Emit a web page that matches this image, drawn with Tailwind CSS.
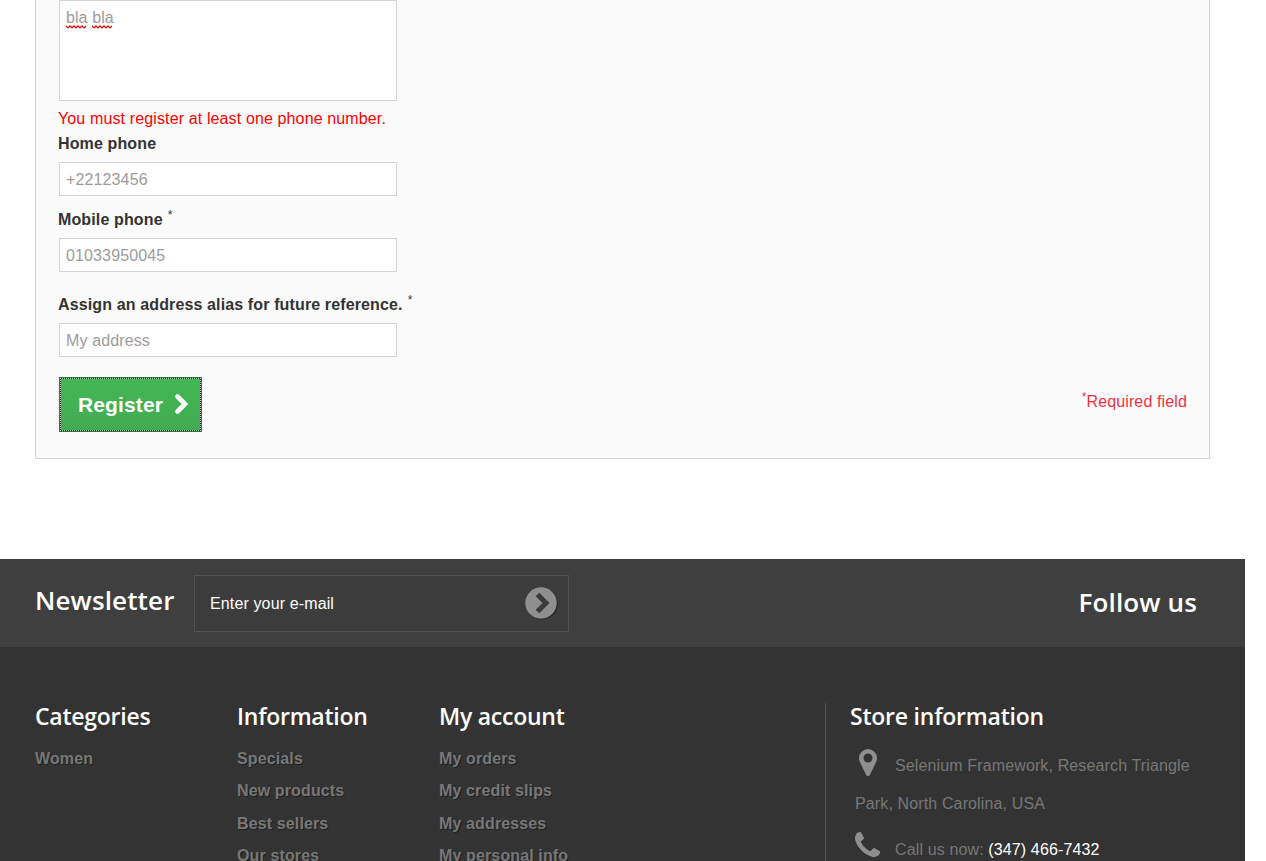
<!DOCTYPE html>
<html lang="en">
<head>
<meta charset="utf-8">
<title>Register</title>
<script src="https://cdn.jsdelivr.net/npm/@tailwindcss/browser@4"></script>
</head>
<body class="h-[861px] w-[1266px] overflow-hidden bg-white font-['Liberation_Sans',Arial,sans-serif] text-base tracking-[0.13px] text-[#333]">
<main class="h-[559px] pl-[35px]">
  <form class="flex h-[459px] w-[1175px] flex-col border border-t-0 border-[#d6d4d4] bg-[#fbfbfb] pl-[23px] pr-[22px]">
    <div class="h-[101px] w-[338px] border border-[#d6d4d4] bg-white pl-1.5 pt-[5px] leading-6 tracking-normal text-[#9c9b9b]">
      <div class="flex gap-[5px]">
        <span class="relative">bla<svg class="absolute left-0 top-[19px]" width="22" height="4" viewBox="0 0 22 4"><path d="M0 .8l2 2 2-2 2 2 2-2 2 2 2-2 2 2 2-2 2 2 2-2" fill="none" stroke="#f00000" stroke-width="1.200"/></svg></span>
        <span class="relative">bla<svg class="absolute left-0 top-[19px]" width="22" height="4" viewBox="0 0 22 4"><path d="M0 .8l2 2 2-2 2 2 2-2 2 2 2-2 2 2 2-2 2 2 2-2" fill="none" stroke="#f00000" stroke-width="1.200"/></svg></span>
      </div>
    </div>
    <p class="-ml-px mt-[5px] h-[25px] leading-[25px] text-[#f00]">You must register at least one phone number.</p>
    <label class="-ml-px h-[31px] font-bold leading-[25px]">Home phone</label>
    <div class="h-[34px] w-[338px] border border-[#d6d4d4] bg-white pl-1.5 leading-[34px] text-[#9c9b9b]">+22123456</div>
    <label class="-ml-px mt-[11px] flex h-[31px] gap-[5px] font-bold leading-[25px]">Mobile phone <span class="-mt-[4px] text-[12px] font-normal">*</span></label>
    <div class="h-[34px] w-[338px] border border-[#d6d4d4] bg-white pl-1.5 leading-[34px] text-[#9c9b9b]">01033950045</div>
    <label class="-ml-px mt-5 flex h-[31px] gap-[5px] font-bold leading-[25px]">Assign an address alias for future reference. <span class="-mt-[4px] text-[12px] font-normal">*</span></label>
    <div class="h-[34px] w-[338px] border border-[#d6d4d4] bg-white pl-1.5 leading-[34px] text-[#9c9b9b]">My address</div>
    <div class="mt-5 flex justify-between">
      <button type="button" class="h-[55px] w-[143px] border border-[#2f7a3c] bg-[#222]">
        <span class="flex h-full items-center border border-dotted border-[#bcd0be] bg-linear-to-b from-[#43b754] to-[#42ac52] bg-clip-padding pl-[17px] text-[21px] font-bold text-white">Register
          <svg class="ml-[11px] -mt-px" width="15" height="22" viewBox="0 0 15 22"><path d="M3.5 3.500L11 11l-7.500 7.500" fill="none" stroke="#fff" stroke-width="4.600" stroke-linecap="round"/></svg>
        </span>
      </button>
      <p class="mt-3 flex h-[25px] leading-[25px] text-[#f13340]"><span class="-mt-1 text-[12px]">*</span>Required field</p>
    </div>
  </form>
</main>
<footer class="h-[302px] w-[1245px] overflow-hidden bg-[#333]">
  <div class="flex h-[88px] bg-[#3f3f3f] pl-[35px] pr-12 font-['Open_Sans',sans-serif] text-white">
    <h4 class="mt-[21px] w-[159px] text-[26px] font-semibold leading-10">Newsletter</h4>
    <div class="mt-4 flex h-[57px] w-[375px] items-center justify-between border border-[#515151] bg-[#3c3c3c] pl-[15px] pr-[10px] font-['Liberation_Sans',Arial,sans-serif]">
      <span>Enter your e-mail</span>
      <svg class="-mt-[2px]" width="34" height="34" viewBox="0 0 34 34"><circle cx="18" cy="18" r="15.700" fill="#292929"/><circle cx="17" cy="17" r="15.700" fill="#8f8f8f"/><path d="M13.500 8.500L22 17l-8.500 8.500" fill="none" stroke="#3a3a3a" stroke-width="5"/></svg>
    </div>
    <h4 class="ml-auto mt-[23px] text-[26px] font-semibold leading-10">Follow us</h4>
  </div>
  <div class="flex pl-[35px] pt-14">
    <section class="w-[202px]">
      <h4 class="h-10 font-['Open_Sans',sans-serif] text-[23px] font-semibold leading-[27px] tracking-[-0.25px] text-white">Categories</h4>
      <ul class="font-bold leading-[32.400px] text-[#777] [text-shadow:1px_1px_0_rgba(0,0,0,0.4)]"><li>Women</li></ul>
    </section>
    <section class="w-[202px]">
      <h4 class="h-10 font-['Open_Sans',sans-serif] text-[23px] font-semibold leading-[27px] tracking-[-0.25px] text-white">Information</h4>
      <ul class="font-bold leading-[32.400px] text-[#777] [text-shadow:1px_1px_0_rgba(0,0,0,0.4)]"><li>Specials</li><li>New products</li><li>Best sellers</li><li>Our stores</li></ul>
    </section>
    <section class="w-[386px]">
      <h4 class="h-10 font-['Open_Sans',sans-serif] text-[23px] font-semibold leading-[27px] tracking-[-0.25px] text-white">My account</h4>
      <ul class="font-bold leading-[32.400px] text-[#777] [text-shadow:1px_1px_0_rgba(0,0,0,0.4)]"><li>My orders</li><li>My credit slips</li><li>My addresses</li><li>My personal info</li></ul>
    </section>
    <section class="h-[200px] border-l border-[#515151] pl-6 text-[#777]">
      <h4 class="h-10 font-['Open_Sans',sans-serif] text-[23px] font-semibold leading-[27px] tracking-[-0.22px] text-white">Store information</h4>
      <div class="flex h-[38px] pl-[5px]">
        <svg class="ml-1 mt-[6px]" width="18" height="27" viewBox="384 128 1024 1536" fill="#8f8f8f"><path d="M1152 640q0-106-75-181t-181-75-181 75-75 181 75 181 181 75 181-75 75-181zm256 0q0 109-33 179l-364 773q-16 33-47.500 52t-67.500 19-67.500-19-46.500-52l-365-773q-33-70-33-179 0-212 150-362t362-150 362 150 150 362z"/></svg>
        <span class="ml-[18px] leading-[46px]">Selenium Framework, Research Triangle</span>
      </div>
      <p class="h-[46px] pl-[5px] leading-[46px]">Park, North Carolina, USA</p>
      <div class="flex pl-[5px]">
        <svg class="mt-[5px]" width="25" height="25" viewBox="192 128 1408 1408" fill="#8f8f8f"><path d="M1600 1240q0 27-10 70.500t-21 68.500q-21 50-122 106-94 51-186 51-27 0-53-3.500t-57.500-12.500-47-14.500-55.500-20.500-49-18q-98-35-175-83-127-79-264-216t-216-264q-48-77-83-175-3-9-18-49t-20.500-55.500-14.500-47-12.500-57.500-3.500-53q0-92 51-186 56-101 106-122 25-11 68.500-21t70.500-10q14 0 21 3 18 6 53 76 11 19 30 54t35 63.500 31 53.500q3 4 17.500 25t21.500 35.500 7 28.500q0 20-28.500 50t-62 55-62 53-28.500 46q0 9 5 22.500t8.500 20.500 14 24 11.500 19q76 137 174 235t235 174q2 1 19 11.500t24 14 20.500 8.500 22.500 5q18 0 46-28.500t53-62 55-62 50-28.500q14 0 28.500 7t35.500 21.500 25 17.500q25 15 53.500 31t63.500 35 54 30q70 35 76 53 3 7 3 21z"/></svg>
        <span class="ml-[15px] leading-[46px]">Call us now: <span class="text-white">(347) 466-7432</span></span>
      </div>
    </section>
  </div>
</footer>
</body>
</html>
